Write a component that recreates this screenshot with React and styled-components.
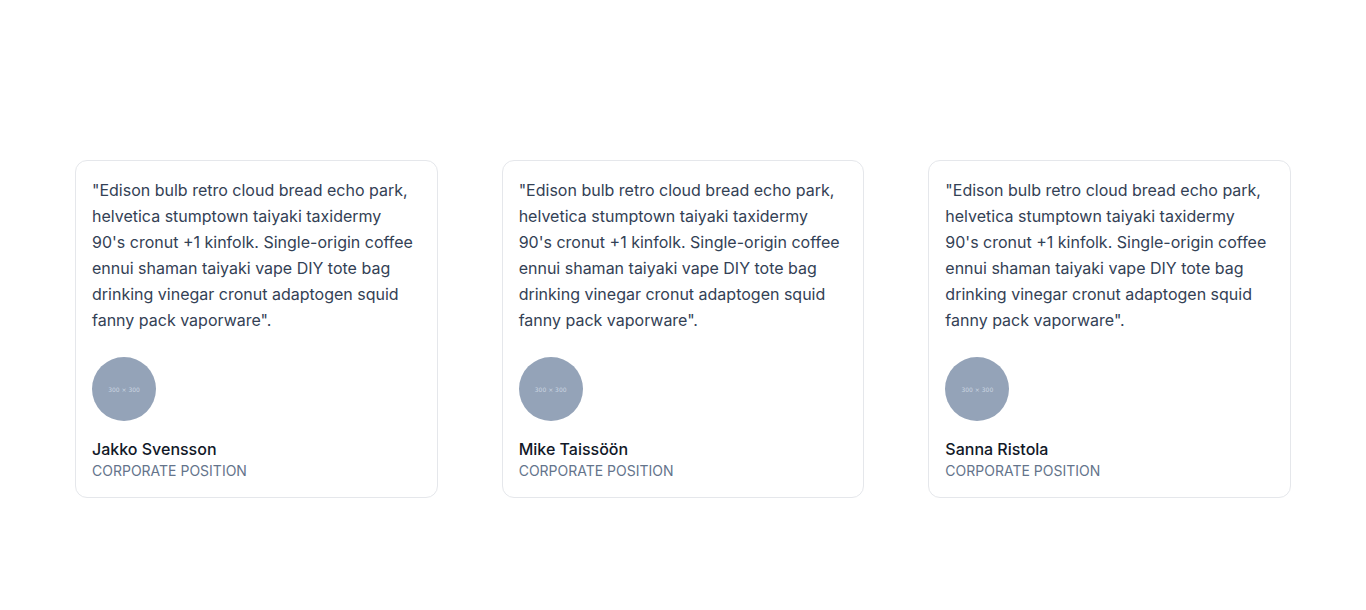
import React from 'react'
import styled, { createGlobalStyle } from 'styled-components'

const GlobalStyle = createGlobalStyle`
  body {
    margin: 0;
    background: #ffffff;
    font-family: Inter, "Noto Sans", sans-serif;
  }
  * { box-sizing: border-box; }
`

const QUOTE =
  '"Edison bulb retro cloud bread echo park, helvetica stumptown taiyaki taxidermy 90\'s cronut +1 kinfolk. Single-origin coffee ennui shaman taiyaki vape DIY tote bag drinking vinegar cronut adaptogen squid fanny pack vaporware".'

const people = [
  { name: 'Jakko Svensson', position: 'Corporate Position' },
  { name: 'Mike Taissöön', position: 'Corporate Position' },
  { name: 'Sanna Ristola', position: 'Corporate Position' },
]

const Testimonial = ({ name, position }) => (
  <Card>
    <Quote>{QUOTE}</Quote>
    <Avatar>
      <span>300 × 300</span>
    </Avatar>
    <Name>{name}</Name>
    <Position>{position}</Position>
  </Card>
)

const App = () => {
  return (
    <>
      <GlobalStyle />
      <Section>
        <Grid>
          {people.map((p) => (
            <Testimonial key={p.name} name={p.name} position={p.position} />
          ))}
        </Grid>
      </Section>
    </>
  )
}

const Section = styled.section`
  padding: 160px 32px 112px;
  max-width: 1280px;
  margin: 0 auto;
`

const Grid = styled.div`
  display: grid;
  grid-template-columns: repeat(3, 1fr);
  gap: 64px;
`

const Card = styled.div`
  display: flex;
  flex-direction: column;
  align-items: flex-start;
  padding: 16px 20px 16px 16px;
  border: 1px solid #e5e7eb;
  border-radius: 12px;
  background: #ffffff;
`

const Quote = styled.p`
  margin: 0;
  font-size: 16px;
  line-height: 26px;
  color: #334155;
`

const Avatar = styled.div`
  margin-top: 24px;
  width: 64px;
  height: 64px;
  border-radius: 50%;
  background: #94a3b8;
  display: flex;
  align-items: center;
  justify-content: center;

  span {
    font-size: 6px;
    color: #cbd5e1;
    font-family: "DejaVu Sans", sans-serif;
  }
`

const Name = styled.h4`
  margin: 16px 0 0;
  font-size: 16px;
  line-height: 24px;
  font-weight: 500;
  color: #111827;
`

const Position = styled.p`
  margin: 0;
  font-size: 14px;
  line-height: 20px;
  text-transform: uppercase;
  color: #64748b;
`

export default App
